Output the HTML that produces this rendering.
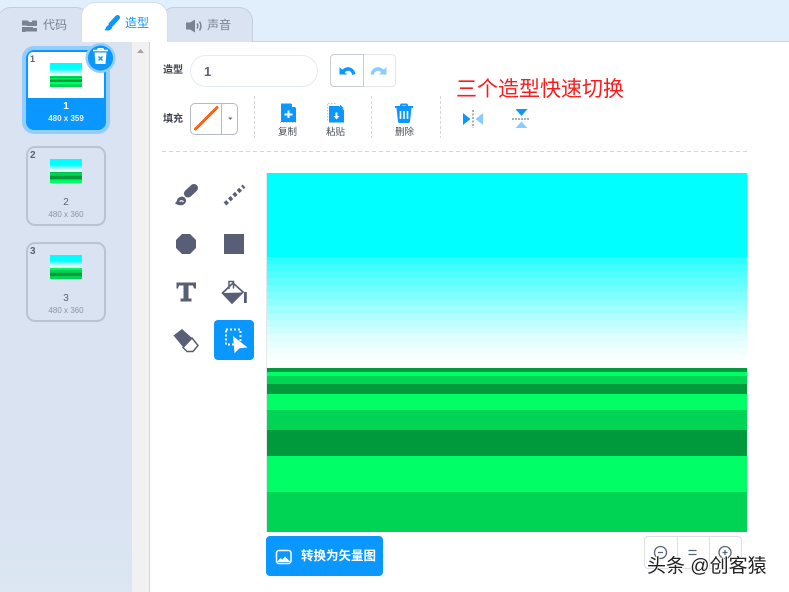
<!DOCTYPE html>
<html><head><meta charset="utf-8">
<style>
html,body{margin:0;padding:0;background:#fff}
body{position:relative;width:789px;height:592px;overflow:hidden;font-family:"Liberation Sans","Noto Sans CJK SC",sans-serif}
.a{position:absolute}
.t{position:absolute;white-space:nowrap;line-height:1}
.band{position:absolute;left:267px;width:480px}
</style></head><body>
<div class="a" style="left:0;top:0;width:789px;height:42px;background:#e1eefc"></div>
<div class="a" style="left:0;top:42px;width:132px;height:550px;background:linear-gradient(#d9e3f2 0,#d9e3f2 85%,#dce7f3 100%)"></div>
<div class="a" style="left:132px;top:42px;width:17px;height:550px;background:#f1f1f1"></div>
<div class="a" style="left:149px;top:42px;width:1px;height:550px;background:#d4d4d4"></div>
<div class="a" style="left:0;top:41px;width:789px;height:1px;background:#cdd6e3"></div>

<!-- tabs -->
<div class="a" style="left:-3px;top:7px;width:91px;height:34px;background:#d9e3f2;border:1px solid #c4cedc;border-bottom:0;border-radius:14px 14px 0 0"></div>
<div class="a" style="left:160px;top:7px;width:91px;height:34px;background:#d9e3f2;border:1px solid #c4cedc;border-bottom:0;border-radius:14px 14px 0 0"></div>
<div class="a" style="left:81px;top:2px;width:87px;height:40px;background:#fff;border:1px solid #d5dfec;border-bottom:0;border-radius:14px 14px 0 0;box-sizing:border-box"></div>
<div class="t" style="left:43px;top:19px;font-size:12px;color:#7b8390">代码</div>
<div class="t" style="left:125px;top:17px;font-size:12px;color:#0a97ff">造型</div>
<div class="t" style="left:207px;top:19px;font-size:12px;color:#7b8390">声音</div>

<!-- sprite 1 -->
<div class="a" style="left:22px;top:46px;width:88px;height:88px;border-radius:12px;background:#93cdfb"></div>
<div class="a" style="left:26px;top:50px;width:80px;height:80px;border-radius:8px;background:#0a97ff"></div>
<div class="a" style="left:28px;top:52px;width:76px;height:46px;background:#fff;border-radius:5px 5px 0 0"></div>
<div class="t" style="left:30px;top:55px;font-size:9px;font-weight:bold;color:#5a6478">1</div>
<div class="t" style="left:26px;top:102px;width:80px;text-align:center;font-size:10px;font-weight:bold;color:#fff">1</div>
<div class="t" style="left:26px;top:115px;width:80px;text-align:center;font-size:8px;font-weight:bold;color:#e3f2ff">480 x 359</div>
<!-- sprite 2 -->
<div class="a" style="left:26px;top:146px;width:80px;height:80px;box-sizing:border-box;border:2px solid #b8c4d6;border-radius:9px"></div>
<div class="t" style="left:30px;top:151px;font-size:10px;font-weight:bold;color:#5a6478">2</div>
<div class="t" style="left:26px;top:198px;width:80px;text-align:center;font-size:10px;color:#5a6478">2</div>
<div class="t" style="left:26px;top:211px;width:80px;text-align:center;font-size:8px;color:#8c95a5">480 x 360</div>
<!-- sprite 3 -->
<div class="a" style="left:26px;top:242px;width:80px;height:80px;box-sizing:border-box;border:2px solid #b8c4d6;border-radius:9px"></div>
<div class="t" style="left:30px;top:247px;font-size:10px;font-weight:bold;color:#5a6478">3</div>
<div class="t" style="left:26px;top:294px;width:80px;text-align:center;font-size:10px;color:#5a6478">3</div>
<div class="t" style="left:26px;top:307px;width:80px;text-align:center;font-size:8px;color:#8c95a5">480 x 360</div>

<!-- thumbs -->
<div class="a" style="left:50px;top:63px;width:32px;height:24px;background:linear-gradient(#00ffff 0,#00ffff 23%,#e9ffff 47%,#fff 53%,#009a3c 54%,#00ff66 56%,#00d455 58%,#009a3c 61%,#00ff66 64%,#00d455 68%,#009a3c 72%,#009a3c 78%,#00ff66 79%,#00ff66 88%,#00d455 89%,#00d455 100%)"></div>
<div class="a" style="left:50px;top:159px;width:32px;height:24px;background:linear-gradient(#00ffff 0,#00ffff 23%,#e9ffff 47%,#fff 53%,#009a3c 54%,#00d455 57%,#00d455 68%,#009a3c 72%,#009a3c 82%,#00d455 84%,#00d455 88%,#00ff66 89%,#00ff66 100%)"></div>
<div class="a" style="left:50px;top:255px;width:32px;height:24px;background:linear-gradient(#00ffff 0,#00ffff 23%,#e9ffff 47%,#fff 53%,#00ff66 54%,#00ff66 60%,#00d455 63%,#00d455 72%,#009a3c 76%,#009a3c 86%,#00d455 88%,#00d455 100%)"></div>

<!-- canvas -->
<div class="band" style="top:173px;height:84px;background:#00ffff"></div>
<div class="band" style="top:257px;height:7px;background:#2bfffd"></div>
<div class="band" style="top:264px;height:7px;background:#40ffff"></div>
<div class="band" style="top:271px;height:7px;background:#50ffff"></div>
<div class="band" style="top:278px;height:7px;background:#60ffff"></div>
<div class="band" style="top:285px;height:7px;background:#70ffff"></div>
<div class="band" style="top:292px;height:7px;background:#80ffff"></div>
<div class="band" style="top:299px;height:7px;background:#90ffff"></div>
<div class="band" style="top:306px;height:7px;background:#a0ffff"></div>
<div class="band" style="top:313px;height:7px;background:#b0ffff"></div>
<div class="band" style="top:320px;height:7px;background:#bfffff"></div>
<div class="band" style="top:327px;height:7px;background:#cfffff"></div>
<div class="band" style="top:334px;height:7px;background:#dfffff"></div>
<div class="band" style="top:341px;height:7px;background:#e8ffff"></div>
<div class="band" style="top:348px;height:7px;background:#f2ffff"></div>
<div class="band" style="top:355px;height:7px;background:#f9ffff"></div>
<div class="band" style="top:362px;height:6px;background:#fff"></div>
<div class="band" style="top:368px;height:4px;background:#009a3c"></div>
<div class="band" style="top:372px;height:4px;background:#00ff66"></div>
<div class="band" style="top:376px;height:8px;background:#00d455"></div>
<div class="band" style="top:384px;height:10px;background:#009a3c"></div>
<div class="band" style="top:394px;height:16px;background:#00ff66"></div>
<div class="band" style="top:410px;height:20px;background:#00d455"></div>
<div class="band" style="top:430px;height:26px;background:#009a3c"></div>
<div class="band" style="top:456px;height:36px;background:#00ff66"></div>
<div class="band" style="top:492px;height:40px;background:#00d455"></div>
<div class="a" style="left:266px;top:173px;width:1px;height:359px;background:#e4e8ee"></div>

<!-- top controls -->
<div class="t" style="left:163px;top:66px;font-size:10px;font-weight:bold;color:#3f434c">造型</div>
<div class="a" style="left:190px;top:55px;width:128px;height:32px;box-sizing:border-box;border:1px solid #e4ecf2;border-radius:16px"></div>
<div class="t" style="left:204px;top:65px;font-size:13px;font-weight:bold;color:#5a6478">1</div>
<div class="a" style="left:330px;top:54px;width:66px;height:33px;box-sizing:border-box;border:1px solid #e2e6ec;border-radius:4px"></div>
<div class="a" style="left:330px;top:54px;width:34px;height:33px;box-sizing:border-box;border:1px solid #c9ced6;border-radius:4px 0 0 4px"></div>

<div class="t" style="left:163px;top:115px;font-size:10px;font-weight:bold;color:#3f434c">填充</div>
<div class="a" style="left:190px;top:103px;width:48px;height:32px;box-sizing:border-box;border:1px solid #b5b9c0;border-radius:5px"></div>
<div class="a" style="left:221px;top:103px;width:1px;height:32px;background:#b5b9c0"></div>

<div class="t" style="left:278px;top:128px;font-size:9.500px;color:#484e58">复制</div>
<div class="t" style="left:326px;top:128px;font-size:9.500px;color:#484e58">粘贴</div>
<div class="t" style="left:395px;top:128px;font-size:9.500px;color:#484e58">删除</div>

<div class="t" style="left:456px;top:79px;font-size:21px;color:#fa1c1c;letter-spacing:0">三个造型快速切换</div>

<!-- selected tool -->
<div class="a" style="left:214px;top:320px;width:40px;height:40px;background:#0a97ff;border-radius:4px"></div>

<!-- convert button -->
<div class="a" style="left:266px;top:536px;width:117px;height:40px;background:#0a97ff;border-radius:4px"></div>
<div class="t" style="left:301px;top:550px;font-size:12.500px;font-weight:bold;color:#fff">转换为矢量图</div>

<!-- zoom buttons -->
<div class="a" style="left:644px;top:536px;width:98px;height:33px;box-sizing:border-box;border:1px solid #dcdfe4;border-radius:4px"></div>
<div class="a" style="left:677px;top:536px;width:1px;height:33px;background:#dcdfe4"></div>
<div class="a" style="left:709px;top:536px;width:1px;height:33px;background:#dcdfe4"></div>

<svg class="a" style="left:0;top:0" width="789" height="592" viewBox="0 0 789 592" fill="none">
  <!-- code tab icon -->
  <path d="M22 20.500h6l1 1.500h3v-1.500h5v5.500H27l-1-.500h-4zM22 27h11v1h4v3.500H26l-1 .500h-3z" fill="#7b8390"/>
  <!-- brush tab icon -->
  <path d="M117.500 17.500L111 24.500" stroke="#0a97ff" stroke-width="5" stroke-linecap="round"/>
  <path d="M109 25c1.800-.5 3.500 1 3 2.800-.7 2.500-4.500 3.500-8 2.200 1.800-.7 1.800-1.800 2.200-2.800.4-1 1.300-1.900 2.800-2.200z" fill="#0a97ff"/>
  <!-- speaker -->
  <path d="M186 22.500h4l5-3v13l-5-3h-4z" fill="#7b8390"/>
  <path d="M197 23.500c1 1.500 1 3.500 0 5M199.500 21.500c1.800 2.800 1.800 6.200 0 9" stroke="#7b8390" stroke-width="1.500"/>
  <!-- scrollbar arrow -->
  <path d="M137 53l3.500-4 3.500 4z" fill="#a3a3a3"/>
  <!-- delete circle -->
  <circle cx="100.500" cy="58" r="15" fill="#93cdfb"/>
  <circle cx="100.500" cy="58" r="12.500" fill="#0a97ff"/>
  <path d="M93 50.500h15M97.500 50.500l.7-1.800h4.600l.7 1.800" stroke="#fff" stroke-width="1.500"/>
  <path d="M94.500 52.500h12l-1 11.500h-10z" fill="#fff"/>
  <path d="M98.500 56.500l4 4M102.500 56.500l-4 4" stroke="#0a97ff" stroke-width="1.500"/>
  <!-- undo -->
  <path d="M339.500 67v7.500h7.500z" fill="#0a97ff"/>
  <path d="M343 71.500C347 67.500 352 68 354 74.500" stroke="#0a97ff" stroke-width="3.500"/>
  <path d="M386.500 67v7.500h-7.500z" fill="#8accff"/>
  <path d="M383 71.500C379 67.500 374 68 372 74.500" stroke="#8accff" stroke-width="3.500"/>
  <!-- fill swatch -->
  <path d="M195.500 129L217 107.500" stroke="#ff5f0a" stroke-width="3" stroke-linecap="round"/>
  <path d="M228 117.500h4.500l-2.200 2.500z" fill="#6a7180"/>
  <!-- dividers -->
  <path d="M254.500 96v42M371.500 96v42M440.500 96v42" stroke="#d6d6d6" stroke-dasharray="3 2"/>
  <path d="M162 151.500h585" stroke="#d6d6d6" stroke-dasharray="4 3"/>
  <!-- copy -->
  <path d="M281 103.500h10l5 4.500v14h-15z" fill="#0a97ff"/>
  <path d="M292 103.500l4 3.500h-4z" fill="#fff"/>
  <path d="M288.500 110.500v7.500M284.500 114.500h8" stroke="#fff" stroke-width="2"/>
  <path d="M280 122.500h16" stroke="#c2c7d0" stroke-dasharray="1.500 1.500"/>
  <!-- paste -->
  <path d="M328 103.500h9M327.500 104v17" stroke="#c2c7d0" stroke-dasharray="1.500 1.500"/>
  <path d="M329 106h10l5 4v12.500h-15z" fill="#0a97ff"/>
  <path d="M340 104.500l4 4h-4z" fill="#0a97ff"/>
  <path d="M336.500 112.500v5" stroke="#fff" stroke-width="2"/>
  <path d="M333.500 116h6l-3 3.500z" fill="#fff"/>
  <!-- trash -->
  <path d="M395 107h18M400.500 107l.8-2.500h5.400l.8 2.500" stroke="#0a97ff" stroke-width="2" stroke-linejoin="round"/>
  <path d="M396.500 108h15l-1.500 13.500q-.2 1.500-1.800 1.500h-8.400q-1.600 0-1.800-1.500z" fill="#0a97ff"/>
  <path d="M400.500 111v8M404 111v8M407.500 111v8" stroke="#fff" stroke-width="1.600"/>
  <!-- flip h -->
  <path d="M463 113l7.500 6-7.500 6z" fill="#0a97ff"/>
  <path d="M483 113l-7.500 6 7.500 6z" fill="#8accff"/>
  <path d="M473 110v18" stroke="#a9aebb" stroke-width="2" stroke-dasharray="2 1.500"/>
  <!-- flip v -->
  <path d="M515.500 109h12l-6 7z" fill="#0a97ff"/>
  <path d="M515.500 128h12l-6-6.500z" fill="#8accff"/>
  <path d="M512 119h18" stroke="#a9aebb" stroke-width="2" stroke-dasharray="2 1"/>
  <!-- tools -->
  <path d="M194 188L188 193.500" stroke="#575e75" stroke-width="8" stroke-linecap="round"/>
  <path d="M180 197c2.500-1 5.500.5 6 3 .4 2.500-1.500 4.800-4.500 5.200-2.500.3-5-.5-6.700-2.200 1.500-.5 1.800-1.500 2.300-3 .4-1.300 1.400-2.500 2.900-3z" fill="#575e75"/>
  <path d="M179.500 201.500c1.500-1.200 3-1 4 .500" stroke="#fff" stroke-width="1.200"/>
  <path d="M225 204l19-18" stroke="#575e75" stroke-width="4" stroke-dasharray="3.500 2.500"/>
  <path d="M182 234h8l6 6v8l-6 6h-8l-6-6v-8z" fill="#575e75"/>
  <rect x="224" y="234" width="20" height="20" fill="#575e75"/>
  <path d="M176.500 282.500h19.500v6h-2l-1-3h-4.500v13h3v3h-11v-3h3v-13h-4.500l-1 3h-1.500z" fill="#575e75"/>
  <!-- bucket -->
  <path d="M222.500 293l10.500-10 10 9-11 11z" fill="#fff" stroke="#575e75" stroke-width="1.700"/>
  <path d="M222.500 293l20.500 -.500-11 10.500z" fill="#575e75"/>
  <path d="M229 289v-7.500h4.500v7" stroke="#575e75" stroke-width="1.500"/>
  <rect x="244" y="292" width="2.800" height="11" fill="#575e75"/>
  <!-- eraser -->
  <path d="M173.500 335.500l8.500-6.500 10 9-9 9z" fill="#575e75"/>
  <path d="M192 338l6 7.500-5 6h-6l-4-4z" fill="#fff" stroke="#575e75" stroke-width="1.500"/>
  <!-- select tool -->
  <rect x="226" y="329.500" width="14.500" height="15" stroke="#fff" stroke-width="2" stroke-dasharray="2 2"/>
  <path d="M233 336l14.500 11.500-8 .800-5 5z" fill="#fff"/>
  <!-- convert icon -->
  <rect x="276.500" y="550.500" width="14.500" height="13" rx="2.500" stroke="#fff" stroke-width="1.500"/>
  <path d="M277 562l3.500-4 2 1.500 2.500-3 2 2 3.500 3.500z" fill="#fff"/>
  <!-- zoom icons -->
  <circle cx="660.500" cy="552.500" r="6" stroke="#5a6478" stroke-width="1.300"/>
  <path d="M658 552.500h5M688.500 550.500h8M688.500 554.500h8" stroke="#5a6478" stroke-width="1.300"/>
  <circle cx="725" cy="552.500" r="6" stroke="#5a6478" stroke-width="1.300"/>
  <path d="M722.500 552.500h5M725 550v5" stroke="#5a6478" stroke-width="1.300"/>
  <!-- watermark outline -->
  <text x="647" y="572" font-family="'Liberation Sans','Noto Sans CJK SC',sans-serif" font-size="19" fill="#fff" stroke="#fff" stroke-width="1.500">头条 @创客猿</text>
  <text x="647" y="572" font-family="'Liberation Sans','Noto Sans CJK SC',sans-serif" font-size="19" fill="#222">头条 @创客猿</text>
</svg>
</body></html>
